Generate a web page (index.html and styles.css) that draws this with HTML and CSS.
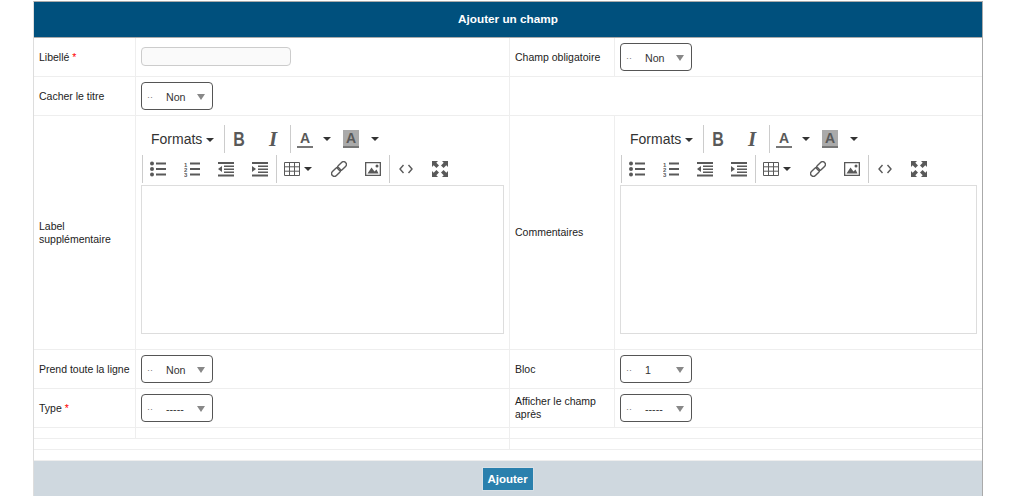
FILE: index.html
```html
<!DOCTYPE html>
<html lang="fr">
<head>
<meta charset="utf-8">
<title>Ajouter un champ</title>
<link rel="stylesheet" href="styles.css">
</head>
<body>
<svg class="defs" width="0" height="0" aria-hidden="true">
  <symbol id="i-bullist" viewBox="0 0 16 16">
    <circle cx="2" cy="2.5" r="2"/><circle cx="2" cy="8" r="2"/><circle cx="2" cy="13.5" r="2"/>
    <rect x="6" y="1.5" width="10" height="2"/><rect x="6" y="7" width="10" height="2"/><rect x="6" y="12.5" width="10" height="2"/>
  </symbol>
  <symbol id="i-numlist" viewBox="0 0 16 16">
    <rect x="6" y="1.5" width="10" height="2"/><rect x="6" y="7" width="10" height="2"/><rect x="6" y="12.5" width="10" height="2"/>
  </symbol>
  <symbol id="i-outdent" viewBox="0 0 16 16">
    <rect x="0" y="1" width="16" height="2"/><rect x="6" y="4.5" width="10" height="1.5"/><rect x="6" y="7.5" width="10" height="1.5"/><rect x="6" y="10.5" width="10" height="1.5"/><rect x="0" y="13.5" width="16" height="2"/>
    <path d="M4 5v6L0 8z"/>
  </symbol>
  <symbol id="i-indent" viewBox="0 0 16 16">
    <rect x="0" y="1" width="16" height="2"/><rect x="6" y="4.5" width="10" height="1.5"/><rect x="6" y="7.5" width="10" height="1.5"/><rect x="6" y="10.5" width="10" height="1.5"/><rect x="0" y="13.5" width="16" height="2"/>
    <path d="M0 5v6l4-3z"/>
  </symbol>
  <symbol id="i-table" viewBox="0 0 16 14">
    <path fill="none" stroke="currentColor" d="M.5.5h15v13H.5zM.5 4.8h15M.5 9.2h15M5.5.5v13M10.5.5v13"/>
  </symbol>
  <symbol id="i-link" viewBox="0 0 16 16">
    <g fill="none" stroke="currentColor" stroke-width="1.4">
      <rect x="8.2" y="0" width="5.6" height="10" rx="2.8" transform="rotate(45 11 5)"/>
      <rect x="2.2" y="6" width="5.6" height="10" rx="2.8" transform="rotate(45 5 11)"/>
    </g>
  </symbol>
  <symbol id="i-image" viewBox="0 0 16 14">
    <path fill-rule="evenodd" d="M0 0h16v14H0zM1.3 1.3v11.4h13.4V1.3z"/>
    <path d="M2.5 11.5l4-6 3 4 2-2 2 4z"/><circle cx="12" cy="4" r="1.5"/>
  </symbol>
  <symbol id="i-code" viewBox="0 0 14 10">
    <path fill="none" stroke="currentColor" stroke-width="1.4" d="M4.5 1L1 5l3.5 4M9.5 1L13 5l-3.5 4"/>
  </symbol>
  <symbol id="i-fullscreen" viewBox="0 0 16 16">
    <path d="M0 0h6L4.3 1.7 7 4.4 4.4 7 1.7 4.3 0 6zM16 0v6l-1.7-1.7L11.6 7 9 4.4l2.7-2.7L10 0zM0 16v-6l1.7 1.7L4.4 9 7 11.6l-2.7 2.7L6 16zM16 16h-6l1.7-1.7L9 11.6 11.6 9l2.7 2.7L16 10z"/>
  </symbol>
</svg>

<main class="panel">
  <h1 class="panel-title">Ajouter un champ</h1>
  <table class="form-table">
    <colgroup><col class="c-label"><col class="c-field"><col class="c-label2"><col class="c-field2"></colgroup>
    <tr class="row">
      <th class="lbl">Libellé <span class="req">*</span></th>
      <td class="fld"><input class="text-input" type="text" aria-label="Libellé"></td>
      <th class="lbl">Champ obligatoire</th>
      <td class="fld last"><div class="sel"><span class="sel-dots">··</span><span class="sel-val">Non</span><span class="sel-arrow"></span></div></td>
    </tr>
    <tr class="row">
      <th class="lbl">Cacher le titre</th>
      <td class="fld"><div class="sel"><span class="sel-dots">··</span><span class="sel-val">Non</span><span class="sel-arrow"></span></div></td>
      <td class="fld last" colspan="2"></td>
    </tr>
    <tr class="row-editor">
      <th class="lbl">Label supplémentaire</th>
      <td class="fld ed-cell">
        <div class="editor">
          <div class="tools">
            <div class="grp grp-first"><span class="fmt">Formats<span class="caret"></span></span></div>
            <div class="grp grp-style"><span class="btn"><span class="txt-b">B</span></span><span class="btn"><span class="txt-i">I</span></span></div>
            <div class="grp grp-color"><span class="btn"><span class="txt-a">A</span></span><span class="btn-caret"><span class="caret"></span></span><span class="btn"><span class="txt-a txt-a-bg">A</span></span><span class="btn-caret"><span class="caret"></span></span></div>
          </div>
          <div class="tools">
            <div class="grp grp-line"><span class="btn"><svg class="ic"><use href="#i-bullist"/></svg></span><span class="btn"><svg class="ic" viewBox="0 0 16 16"><use href="#i-numlist" width="16" height="16"/><text x="0" y="5.5" class="mini">1</text><text x="0" y="10.8" class="mini">2</text><text x="0" y="16" class="mini">3</text></svg></span><span class="btn"><svg class="ic"><use href="#i-outdent"/></svg></span><span class="btn"><svg class="ic"><use href="#i-indent"/></svg></span></div>
            <div class="grp"><span class="btn btn-wide"><svg class="ic ic-t"><use href="#i-table"/></svg><span class="caret"></span></span><span class="btn"><svg class="ic"><use href="#i-link"/></svg></span><span class="btn"><svg class="ic ic-t"><use href="#i-image"/></svg></span></div>
            <div class="grp grp-shift"><span class="btn"><svg class="ic ic-c"><use href="#i-code"/></svg></span><span class="btn"><svg class="ic"><use href="#i-fullscreen"/></svg></span></div>
          </div>
          <div class="ed-box"></div>
        </div>
      </td>
      <th class="lbl">Commentaires</th>
      <td class="fld last ed-cell">
        <div class="editor">
          <div class="tools">
            <div class="grp grp-first"><span class="fmt">Formats<span class="caret"></span></span></div>
            <div class="grp grp-style"><span class="btn"><span class="txt-b">B</span></span><span class="btn"><span class="txt-i">I</span></span></div>
            <div class="grp grp-color"><span class="btn"><span class="txt-a">A</span></span><span class="btn-caret"><span class="caret"></span></span><span class="btn"><span class="txt-a txt-a-bg">A</span></span><span class="btn-caret"><span class="caret"></span></span></div>
          </div>
          <div class="tools">
            <div class="grp grp-line"><span class="btn"><svg class="ic"><use href="#i-bullist"/></svg></span><span class="btn"><svg class="ic" viewBox="0 0 16 16"><use href="#i-numlist" width="16" height="16"/><text x="0" y="5.5" class="mini">1</text><text x="0" y="10.8" class="mini">2</text><text x="0" y="16" class="mini">3</text></svg></span><span class="btn"><svg class="ic"><use href="#i-outdent"/></svg></span><span class="btn"><svg class="ic"><use href="#i-indent"/></svg></span></div>
            <div class="grp"><span class="btn btn-wide"><svg class="ic ic-t"><use href="#i-table"/></svg><span class="caret"></span></span><span class="btn"><svg class="ic"><use href="#i-link"/></svg></span><span class="btn"><svg class="ic ic-t"><use href="#i-image"/></svg></span></div>
            <div class="grp grp-shift"><span class="btn"><svg class="ic ic-c"><use href="#i-code"/></svg></span><span class="btn"><svg class="ic"><use href="#i-fullscreen"/></svg></span></div>
          </div>
          <div class="ed-box"></div>
        </div>
      </td>
    </tr>
    <tr class="row">
      <th class="lbl">Prend toute la ligne</th>
      <td class="fld"><div class="sel"><span class="sel-dots">··</span><span class="sel-val">Non</span><span class="sel-arrow"></span></div></td>
      <th class="lbl">Bloc</th>
      <td class="fld last"><div class="sel"><span class="sel-dots">··</span><span class="sel-val">1</span><span class="sel-arrow"></span></div></td>
    </tr>
    <tr class="row">
      <th class="lbl">Type <span class="req">*</span></th>
      <td class="fld"><div class="sel"><span class="sel-dots">··</span><span class="sel-val">-----</span><span class="sel-arrow"></span></div></td>
      <th class="lbl">Afficher le champ après</th>
      <td class="fld last"><div class="sel"><span class="sel-dots">··</span><span class="sel-val">-----</span><span class="sel-arrow"></span></div></td>
    </tr>
    <tr class="row-thin">
      <td></td><td></td><td class="last" colspan="2"></td>
    </tr>
    <tr class="row-thin">
      <td colspan="2"></td><td class="last" colspan="2"></td>
    </tr>
    <tr class="row-thin">
      <td class="last" colspan="4"></td>
    </tr>
  </table>
  <div class="panel-foot"><button class="submit" type="button">Ajouter</button></div>
</main>
</body>
</html>
```
FILE: styles.css
```css
* { box-sizing: border-box; }
html, body { margin: 0; padding: 0; height: 496px; overflow: hidden; background: #fff; }
body { padding: 1px 30px 0 33px; font-family: "Liberation Sans", Arial, sans-serif; font-size: 10.5px; color: #333; }
.defs { position: absolute; }

.panel { width: 950px; border-left: 1px solid #ddd; border-right: 1px solid #aaa; border-top: 1px solid #aaa; }
.panel-title { margin: 0; height: 36px; line-height: 34px; text-align: center; font-size: 11.76px; font-weight: bold; color: #fff; background: #00507d; border-bottom: 1px solid #aaa; }

.form-table { width: 948px; table-layout: fixed; border-collapse: separate; border-spacing: 0; }
.c-label { width: 102px; }
.c-field { width: 374px; }
.c-label2 { width: 105px; }
.c-field2 { width: 367px; }
.form-table th, .form-table td { padding: 0; border-right: 1px solid #eee; border-bottom: 1px solid #eee; vertical-align: middle; }
.form-table .last { border-right: 0; }

.row th, .row td { height: 39px; }
.row-editor th, .row-editor td { height: 234px; }
.row-thin td { height: 11px; }
.form-table .lbl { padding: 0 4px 0 5px; text-align: left; font-weight: normal; line-height: 13px; color: #222; }
.form-table .fld { padding: 0 5px; }
.form-table .ed-cell { padding: 9px 5px 15px; vertical-align: top; }
.req { color: #f00; }

.text-input { display: block; width: 150px; height: 19px; margin-bottom: 1px; padding: 0 4px; border: 1px solid #ccc; border-radius: 4px; background: #fafafa; }

.sel { display: flex; align-items: center; width: 72px; height: 28px; padding: 2px 7px 0 5px; border: 1px solid #555; border-radius: 4px; background: #fff; font-size: 10.67px; color: #333; }
.sel-dots { width: 19px; color: #777; font-size: 9px; }
.sel-val { flex: 1; }
.sel-arrow { width: 0; height: 0; border-left: 4.5px solid transparent; border-right: 4.5px solid transparent; border-top: 6px solid #888; }

.tools { display: flex; height: 28px; margin-bottom: 2px; }
.grp { display: flex; align-items: center; padding-left: 1px; border-left: 1px solid #ccc; }
.grp-first { width: 83px; padding-left: 10px; border-left: 0; }
.grp-style { padding-left: 0; }
.grp-color { padding-left: 0; }
.grp-line { margin-left: 1px; }
.grp-shift { padding-left: 2px; }
.fmt { font-size: 14px; color: #333; white-space: nowrap; }
.fmt .caret { margin-left: 4px; }

.btn { display: flex; align-items: center; justify-content: center; width: 28px; height: 24px; margin-right: 6px; color: #595959; }
.grp .btn:last-child { margin-right: 2px; }
.grp-style .btn:last-child { margin-right: 3px; }
.grp-color .btn { margin-right: 4px; }
.btn-wide { width: 41px; justify-content: flex-start; padding-left: 6px; }
.btn-wide .caret { margin-left: 4px; }
.btn-caret { display: flex; align-items: center; justify-content: center; width: 8px; margin-right: 6px; }
.btn-caret:last-child { margin-left: 2px; }

.caret { display: inline-block; vertical-align: middle; width: 0; height: 0; border-left: 4px solid transparent; border-right: 4px solid transparent; border-top: 4px solid #333; }

.txt-b { display: block; font-size: 19.5px; font-weight: bold; line-height: 20px; transform: scaleX(.82); }
.txt-i { display: block; font-family: "Liberation Serif", serif; font-size: 21px; font-weight: bold; font-style: italic; line-height: 20px; }
.txt-a { display: block; width: 16px; height: 18px; font-size: 14px; font-weight: bold; line-height: 16px; text-align: center; border-bottom: 2px solid #777; }
.txt-a-bg { background: #aaa; }

.ic { width: 16px; height: 16px; fill: currentColor; color: #595959; }
.ic-t { height: 14px; }
.ic-c { width: 14px; height: 10px; }
.mini { font-family: "Liberation Sans", sans-serif; font-size: 6px; font-weight: bold; }

.ed-box { height: 149px; border: 1px solid #ddd; background: #fff; }

.panel-foot { display: flex; justify-content: center; height: 40px; padding-top: 6px; background: #cfd8df; }
.submit { width: 52px; height: 24px; margin-right: 1px; padding: 0; border: 1px solid #d8e0e6; background: #2a80ad; color: #fff; font-family: "Liberation Sans", Arial, sans-serif; font-size: 11.5px; font-weight: bold; }
```
